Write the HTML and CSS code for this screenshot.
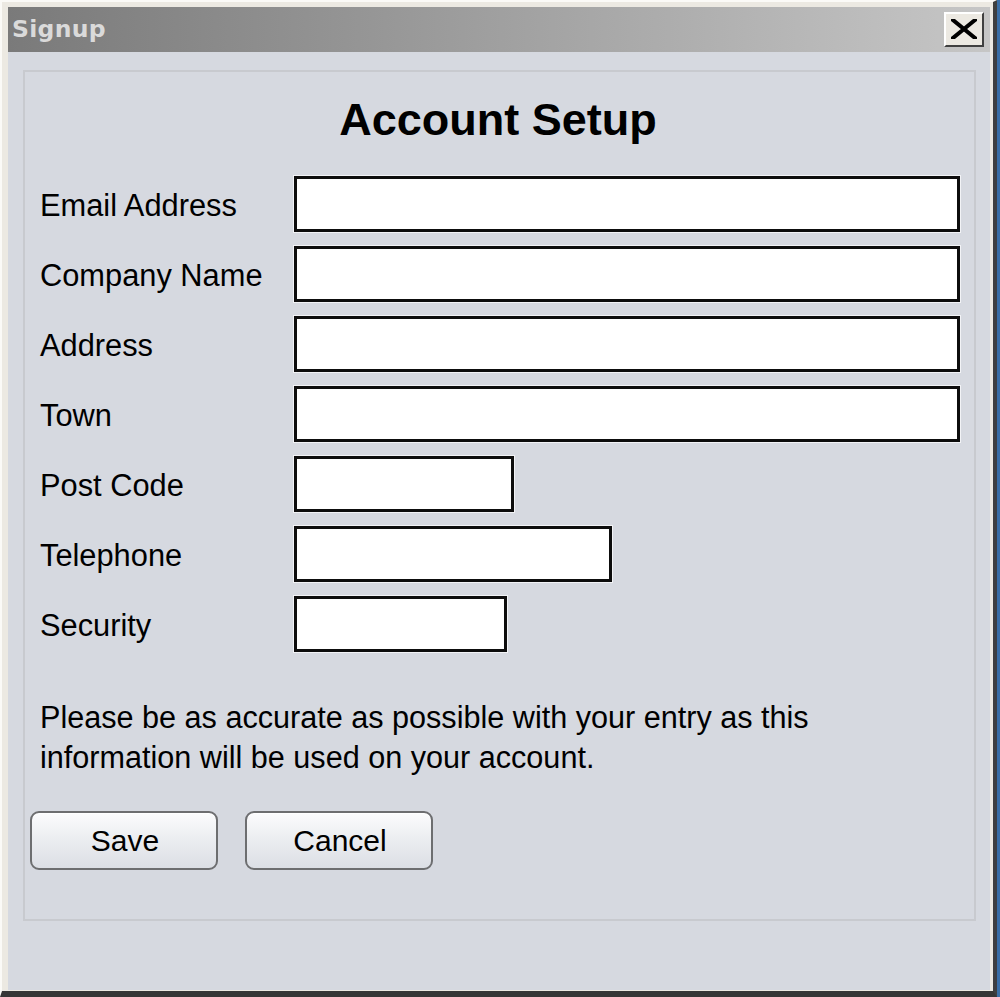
FILE: index.html
```html
<!DOCTYPE html>
<html lang="en">
<head>
<meta charset="utf-8">
<title>Signup</title>
<link rel="stylesheet" href="styles.css">
</head>
<body>
<div class="window">
  <div class="frame">
    <div class="titlebar">
      <span class="title">Signup</span>
      <button class="close" type="button" aria-label="Close">
        <svg width="26" height="20" viewBox="0 0 26 20"><path d="M2 1 L24 19 M24 1 L2 19" stroke="#000" stroke-width="4" stroke-linecap="square"/></svg>
      </button>
    </div>
    <div class="content">
      <div class="panel">
        <h1 class="heading">Account Setup</h1>
        <div class="form">
          <label class="label">Email Address</label><div class="field w-full"></div>
          <label class="label">Company Name</label><div class="field w-full"></div>
          <label class="label">Address</label><div class="field w-full"></div>
          <label class="label">Town</label><div class="field w-full"></div>
          <label class="label">Post Code</label><div class="field w-post"></div>
          <label class="label">Telephone</label><div class="field w-tel"></div>
          <label class="label">Security</label><div class="field w-sec"></div>
        </div>
        <p class="note">Please be as accurate as possible with your entry as this<br>information will be used on your account.</p>
        <div class="buttons">
          <button class="btn" type="button">Save</button>
          <button class="btn" type="button">Cancel</button>
        </div>
      </div>
    </div>
  </div>
</div>
</body>
</html>
```

FILE: styles.css
```css
html, body {
  margin: 0;
  padding: 0;
}
body {
  width: 1000px;
  height: 997px;
  overflow: hidden;
  font-family: "Liberation Sans", Arial, sans-serif;
  color: #000;
}
.window {
  width: 1000px;
  height: 997px;
  box-sizing: border-box;
  border-right: 3px solid #3b6ea5;
  background: #f3f0ea;
}
.frame {
  height: 100%;
  box-sizing: border-box;
  border-right: 4px solid #3f3f3f;
  border-bottom: 6px solid #363636;
  border-left: 2px solid #fbfaf7;
  border-top: 2px solid #fbfaf7;
  padding: 5px 3px 1px 6px;
  background: #ece9e2;
  display: flex;
  flex-direction: column;
}
.titlebar {
  height: 45px;
  flex: none;
  display: flex;
  align-items: center;
  justify-content: space-between;
  padding: 0 6px 0 4px;
  background: linear-gradient(to right, #7a7a7a 0%, #9c9c9c 45%, #c6c6c6 100%);
}
.title {
  font-family: "DejaVu Sans", Verdana, sans-serif;
  font-weight: bold;
  font-size: 23.5px;
  color: #dadada;
  letter-spacing: 0.3px;
  padding-bottom: 1px;
}
.close {
  width: 40px;
  height: 35px;
  margin: 0;
  padding: 0;
  box-sizing: border-box;
  background: #ece9e2;
  border: 2px solid;
  border-color: #ffffff #404040 #404040 #ffffff;
  display: flex;
  align-items: center;
  justify-content: center;
}
.close svg {
  display: block;
  margin-top: -1px;
}
.content {
  flex: 1;
  background: #d6d9e0;
  padding: 18px 14px 69px 15px;
  display: flex;
  flex-direction: column;
}
.panel {
  flex: 1;
  border: 2px solid #c8cacf;
  padding: 22px 15px 0 15px;
}
.heading {
  margin: 0;
  font-size: 45px;
  line-height: 52px;
  font-weight: bold;
  text-align: center;
  padding-right: 3px;
}
.form {
  margin-top: 30px;
  display: grid;
  grid-template-columns: 254px 1fr;
  row-gap: 14px;
  align-items: center;
}
.label {
  font-size: 30.8px;
  line-height: 36px;
  padding-top: 4px;
  white-space: nowrap;
}
.field {
  height: 56px;
  box-sizing: border-box;
  border: 3px solid #0d0d0d;
  background: #fff;
  box-shadow: 0 0 0 1px #f2f3f6;
}
.w-full { width: 666px; }
.w-post { width: 220px; }
.w-tel { width: 318px; }
.w-sec { width: 213px; }
.note {
  margin: 45px 0 0 0;
  font-size: 30.6px;
  line-height: 40px;
  white-space: nowrap;
}
.buttons {
  margin: 34px 0 0 -10px;
  display: flex;
  gap: 27px;
}
.btn {
  width: 188px;
  height: 59px;
  box-sizing: border-box;
  border: 2px solid #6d6e70;
  border-radius: 9px;
  background: linear-gradient(to bottom, #fcfcfd 0%, #eceef1 45%, #dcdfe5 100%);
  box-shadow: inset 0 1px 0 #ffffff;
  font-family: "Liberation Sans", Arial, sans-serif;
  font-size: 30px;
  color: #000;
  padding: 0 0 0 2px;
}
```
